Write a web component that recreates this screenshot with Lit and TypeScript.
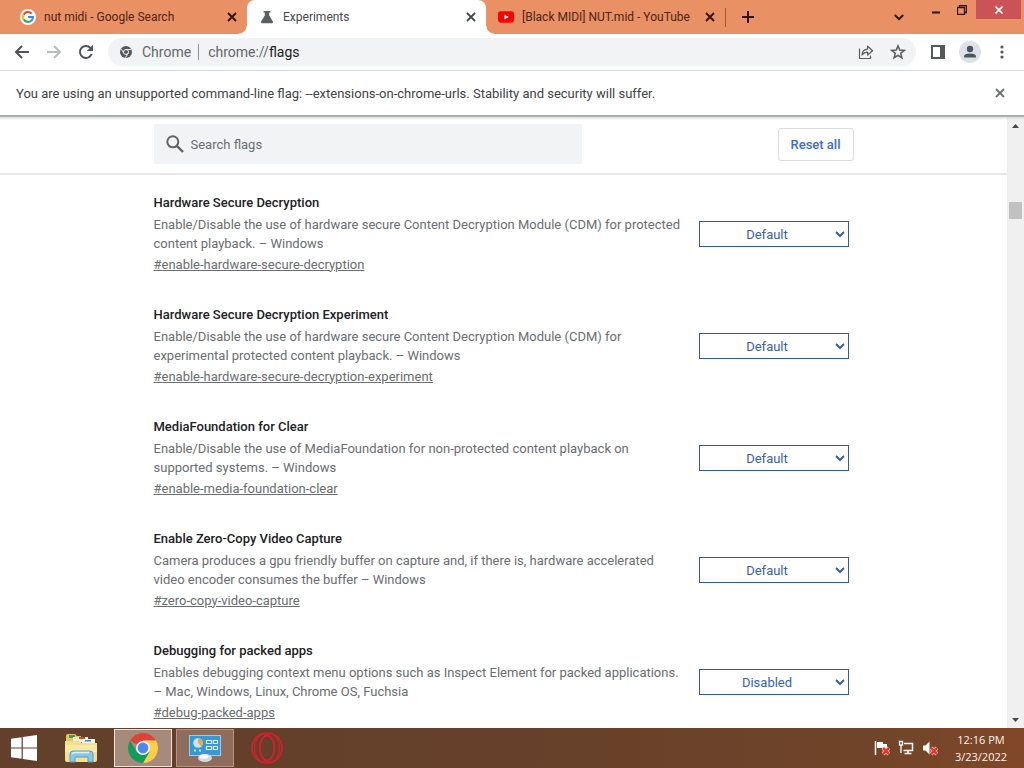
import { LitElement, html, css, svg } from "lit";
import { customElement, property } from "lit/decorators.js";

interface Flag {
  id: string;
  title: string;
  description: string;
  platforms: string;
  value: string;
}

const FLAGS: Flag[] = [
  {
    id: "enable-hardware-secure-decryption",
    title: "Hardware Secure Decryption",
    description:
      "Enable/Disable the use of hardware secure Content Decryption Module (CDM) for protected content playback.",
    platforms: "Windows",
    value: "Default",
  },
  {
    id: "enable-hardware-secure-decryption-experiment",
    title: "Hardware Secure Decryption Experiment",
    description:
      "Enable/Disable the use of hardware secure Content Decryption Module (CDM) for experimental protected content playback.",
    platforms: "Windows",
    value: "Default",
  },
  {
    id: "enable-media-foundation-clear",
    title: "MediaFoundation for Clear",
    description:
      "Enable/Disable the use of MediaFoundation for non-protected content playback on supported systems.",
    platforms: "Windows",
    value: "Default",
  },
  {
    id: "zero-copy-video-capture",
    title: "Enable Zero-Copy Video Capture",
    description:
      "Camera produces a gpu friendly buffer on capture and, if there is, hardware accelerated video encoder consumes the buffer",
    platforms: "Windows",
    value: "Default",
  },
  {
    id: "debug-packed-apps",
    title: "Debugging for packed apps",
    description:
      "Enables debugging context menu options such as Inspect Element for packed applications.",
    platforms: "Mac, Windows, Linux, Chrome OS, Fuchsia",
    value: "Disabled",
  },
];

const closeIcon = html`<svg width="10" height="10" viewBox="0 0 10 10" aria-hidden="true">
  <path d="M1 1L9 9M9 1L1 9" fill="none" stroke="currentColor" stroke-width="1.8" />
</svg>`;

const googleIcon = html`<svg width="16" height="16" viewBox="0 0 16 16" aria-hidden="true">
  <circle cx="8" cy="8" r="8" fill="#fff" />
  <g fill="none" stroke-width="2">
    <path d="M11.6 4.5A5 5 0 0 0 3.6 5.7" stroke="#ea4335" />
    <path d="M3.6 5.6A5 5 0 0 0 3.6 10.4" stroke="#fbbc05" />
    <path d="M3.6 10.3A5 5 0 0 0 11.2 11.8" stroke="#34a853" />
    <path d="M8 8H13A5 5 0 0 1 11.1 11.9" stroke="#4285f4" />
  </g>
</svg>`;

const flaskIcon = html`<svg width="14" height="14" viewBox="0 0 14 14" aria-hidden="true">
  <path d="M3.6 1H10.4V2.4H9.2V5.6L13 11.8Q13.4 13.2 12 13.2H2Q0.6 13.2 1 11.8L4.8 5.6V2.4H3.6Z" fill="#5a5d61" />
</svg>`;

const youtubeIcon = html`<svg width="17" height="12" viewBox="0 0 17 12" aria-hidden="true">
  <rect width="17" height="12" rx="3" fill="#f00" />
  <path d="M6.8 3.4L11.2 6L6.8 8.6Z" fill="#fff" />
</svg>`;

@customElement("browser-tab")
class BrowserTab extends LitElement {
  @property() label = "";
  @property({ type: Boolean, reflect: true }) active = false;

  static styles = css`
    :host {
      display: flex;
      align-items: center;
      flex: 0 1 239px;
      min-width: 0;
      height: 34px;
      padding: 0 10px 0 12px;
      box-sizing: border-box;
      color: #4d2412;
    }
    :host([active]) {
      position: relative;
      background: #fff;
      color: #45484c;
      border-radius: 8px 8px 0 0;
    }
    :host([active])::before,
    :host([active])::after {
      content: "";
      position: absolute;
      bottom: 0;
      width: 8px;
      height: 8px;
    }
    :host([active])::before {
      right: 100%;
      background: radial-gradient(circle at 0 0, transparent 7px, #fff 8px);
    }
    :host([active])::after {
      left: 100%;
      background: radial-gradient(circle at 100% 0, transparent 7px, #fff 8px);
    }
    .icon {
      display: flex;
      justify-content: center;
      width: 16px;
      margin-right: 8px;
    }
    .label {
      flex: 1;
      white-space: nowrap;
      overflow: hidden;
    }
    .close {
      display: flex;
      padding: 0;
      margin: 0;
      border: 0;
      background: none;
      color: inherit;
    }
    :host(:not([active])) .close {
      color: #2d150a;
    }
  `;

  render() {
    return html`<span class="icon"><slot></slot></span>
      <span class="label">${this.label}</span>
      <button class="close" aria-label="Close tab">${closeIcon}</button>`;
  }
}

@customElement("flag-item")
class FlagItem extends LitElement {
  @property({ attribute: false }) flag!: Flag;

  static styles = css`
    :host {
      display: flex;
      align-items: center;
      height: 112px;
      font-size: 13px;
      color: #6a6d71;
    }
    .text {
      flex: 1;
      min-width: 0;
      padding: 0 12px 2px 0;
    }
    .title {
      margin: 0 0 2px;
      font-size: 13px;
      line-height: 21px;
      font-weight: 500;
      color: #202124;
    }
    .description {
      margin: 0 0 2px;
      line-height: 19px;
    }
    .permalink {
      display: block;
      line-height: 20px;
      color: inherit;
    }
    .choice {
      width: 150px;
      height: 26px;
      margin: 0 5px 0 0;
      padding: 0 1px 0 0;
      border: 1px solid #2a6099;
      border-radius: 0;
      background: #fff;
      color: #3a62b0;
      font-family: inherit;
      font-size: 13px;
      text-align: center;
      text-align-last: center;
    }
  `;

  render() {
    const f = this.flag;
    const titleId = `${f.id}-title`;
    return html`<div class="text">
        <h3 class="title" id=${titleId}>${f.title}</h3>
        <p class="description">${`${f.description} – ${f.platforms}`}</p>
        <a class="permalink" href=${`#${f.id}`}>${`#${f.id}`}</a>
      </div>
      <select class="choice" aria-labelledby=${titleId}>
        ${["Default", "Enabled", "Disabled"].map(
          (o) => html`<option ?selected=${o === f.value}>${o}</option>`
        )}
      </select>`;
  }
}

@customElement("task-bar")
class TaskBar extends LitElement {
  static styles = css`
    :host {
      display: flex;
      align-items: center;
      flex: none;
      height: 40px;
      background: linear-gradient(90deg, #62402c, #66402a 50%, #704429 85%, #804828);
      color: #fff3e8;
    }
    .app {
      display: flex;
      align-items: center;
      justify-content: center;
      width: 58px;
      height: 38px;
      margin: 0 4px 0 0;
      padding: 0;
      border: 1px solid transparent;
      box-sizing: border-box;
      background: none;
    }
    .start {
      width: 48px;
      margin: 0;
    }
    .files {
      width: 62px;
      padding-left: 4px;
    }
    .running {
      border-color: #b9917c;
      background: #8f6c5b;
    }
    .current {
      border-color: #f3e0d6;
      background: #a68b7d;
    }
    .tray {
      display: flex;
      align-items: center;
      gap: 8px;
      margin-left: auto;
      margin-right: 16px;
    }
    .clock {
      display: flex;
      flex-direction: column;
      align-items: center;
      width: 54px;
      margin-right: 16px;
      font-family: "Open Sans", "Noto Sans", sans-serif;
      font-size: 11px;
      line-height: 17px;
      white-space: nowrap;
    }
  `;

  render() {
    const badge = svg`<path d="M9 8L15 14M15 8L9 14" stroke="#f7b0a4" stroke-width="4" /><path d="M9 8L15 14M15 8L9 14" stroke="#e0362c" stroke-width="2.4" />`;
    return html`<button class="app start" aria-label="Start">
        <svg width="26" height="26" viewBox="0 0 26 26">
          <path d="M0 3.8L10.6 2.3V12.4H0ZM11.8 2.1L26 0V12.4H11.8ZM0 13.6H10.6V23.7L0 22.2ZM11.8 13.6H26V26L11.8 23.9Z" fill="#fff" />
        </svg>
      </button>
      <button class="app files" aria-label="File Explorer">
        <svg width="34" height="32" viewBox="0 0 34 32">
          <path d="M2 4Q2 2 4 2H11L13 4H17V28H2Z" fill="#e5c469" />
          <path d="M5 3H11V6H5Z" fill="#3e9b55" />
          <path d="M9 5H24V10H9Z" fill="#f7f2dc" />
          <path d="M15 5H21V7H15Z" fill="#cc4840" />
          <path d="M18 7H31V12H18Z" fill="#f5f6f0" />
          <path d="M21 8H27V9.5H21Z" fill="#3f86c9" />
          <path d="M1 9H15L18 11H33V28Q33 30 31 30H3Q1 30 1 28Z" fill="#f5df8d" />
          <path d="M1 13H33V20H1Z" fill="#f9e9a6" />
          <path d="M6 30V22Q6 19 9 19H26Q29 19 29 22V30H24V25H11V30Z" fill="#8bc8e8" stroke="#4fa0cf" />
          <path d="M8 22Q9 20.5 11 20.5H25" stroke="#d9f2fc" stroke-width="1.5" fill="none" />
        </svg>
      </button>
      <button class="app current" aria-label="Google Chrome">
        <svg width="30" height="30" viewBox="0 0 30 30">
          <path d="M15 15L2.01 7.5A15 15 0 0 1 27.99 7.5H15Z" fill="#db4437" />
          <path d="M15 15L15 7.5H27.99A15 15 0 0 1 15 30L21.5 18.75Z" fill="#ffcd46" />
          <path d="M15 30A15 15 0 0 1 2.01 7.5L8.5 18.75L15 15L21.5 18.75Z" fill="#0f9d58" />
          <circle cx="15" cy="15" r="7" fill="#f4f4f4" />
          <circle cx="15" cy="15" r="5.4" fill="#4b87ee" />
        </svg>
      </button>
      <button class="app running" aria-label="Control Panel">
        <svg width="32" height="30" viewBox="0 0 32 30">
          <rect x="0.5" y="2.5" width="31" height="20" fill="#3798d6" stroke="#8fd0f3" />
          <circle cx="9" cy="10" r="4.8" fill="#c4e6f8" />
          <path d="M9 10V5.2A4.8 4.8 0 0 1 12.4 13.4Z" fill="#f2a93b" />
          <g fill="#3a8fc6" stroke="#d6f1ff" stroke-width="1.2">
            <path d="M17.5 7.5H22.5V10.5H17.5ZM24.5 7.5H28.5V10.5H24.5ZM17.5 13.5H22.5V16.5H17.5ZM24.5 13.5H28.5V16.5H24.5Z" />
          </g>
          <path d="M5 17.5H7M10 17.5H12" stroke="#cfe86d" stroke-width="2" />
          <ellipse cx="16" cy="25" rx="7" ry="4" fill="#d4d9dc" />
          <ellipse cx="15" cy="23.6" rx="4.4" ry="2.4" fill="#f5f7f8" />
        </svg>
      </button>
      <button class="app" aria-label="Opera">
        <svg width="34" height="34" viewBox="0 0 34 34" fill="none" stroke="#d3202f">
          <circle cx="17" cy="17" r="15" stroke-width="1.6" />
          <ellipse cx="17" cy="17" rx="7.2" ry="12.2" stroke-width="1.6" />
          <ellipse cx="14.5" cy="17" rx="10" ry="14.2" stroke-width="1.2" />
          <ellipse cx="19.5" cy="17" rx="10" ry="14.2" stroke-width="1.2" />
        </svg>
      </button>
      <div class="tray">
        <svg width="16" height="16" viewBox="0 0 16 16" fill="none" role="img" aria-label="Action Center">
          <path d="M1.5 1V15" stroke="#fff" stroke-width="1.5" />
          <path d="M3 2H9V4H13V9H8V8H3Z" fill="#fff" />
          ${badge}
        </svg>
        <svg width="16" height="16" viewBox="0 0 16 16" fill="none" stroke="#fff" role="img" aria-label="Network">
          <path d="M6 3.5H14.5V10.5H5.5M10 11V13.5M6.5 13.5H13.5" stroke-width="1.5" />
          <path d="M1.5 1.5H4.5V5H1.5ZM3 5V13" stroke-width="1.3" />
        </svg>
        <svg width="16" height="16" viewBox="0 0 16 16" fill="none" role="img" aria-label="Volume muted">
          <path d="M1 5.5H3.5L7.5 1.5V14.5L3.5 10.5H1Z" fill="#fff" />
          ${badge}
        </svg>
      </div>
      <div class="clock"><span>12:16 PM</span><span>3/23/2022</span></div>`;
  }
}

@customElement("app-root")
class AppRoot extends LitElement {
  static styles = css`
    :host {
      display: flex;
      flex-direction: column;
      height: 100vh;
      overflow: hidden;
      background: #fff;
      font-family: Roboto, "Liberation Sans", sans-serif;
      font-size: 12px;
    }
    button {
      margin: 0;
      padding: 0;
      border: 0;
      background: none;
      font-family: inherit;
      color: inherit;
    }
    svg {
      display: block;
    }
    .tabs {
      display: flex;
      flex: none;
      height: 34px;
      padding-left: 8px;
      background: #ea9065;
    }
    .new-tab {
      display: flex;
      align-items: center;
      padding-left: 16px;
      color: #2d150a;
    }
    .divider {
      align-self: center;
      width: 1px;
      height: 19px;
      background: #9b5a3b;
    }
    .window {
      display: flex;
      align-items: flex-start;
      margin-left: auto;
      color: #2d150a;
    }
    .window button {
      display: flex;
      align-items: center;
      justify-content: center;
      width: 26px;
      height: 19px;
    }
    .window .search {
      height: 34px;
      margin-right: 11px;
    }
    .window .quit {
      width: 45px;
      margin: 0 3px 0 1px;
      background: #c95356;
      color: #fff;
    }
    .toolbar {
      display: flex;
      align-items: center;
      flex: none;
      height: 37px;
      padding: 0 14px;
      box-sizing: border-box;
      border-bottom: 1px solid #d8dadc;
      color: #54575b;
    }
    .nav {
      display: flex;
      gap: 16px;
    }
    .address {
      display: flex;
      align-items: center;
      flex: 1;
      height: 28px;
      margin: 0 14px;
      padding: 0 10px 0 12px;
      border-radius: 14px;
      background: #f1f3f4;
      font-size: 14px;
      color: #64676b;
    }
    .scheme {
      padding: 0 7px 0 10px;
      margin-right: 9px;
      border-right: 1px solid #8b8e92;
      line-height: 16px;
    }
    .url {
      flex: 1;
      text-decoration: none;
      color: inherit;
    }
    .page {
      color: #202124;
    }
    .actions {
      display: flex;
      gap: 16px;
      color: #5a5d61;
    }
    .side {
      display: flex;
      align-items: center;
      gap: 13px;
    }
    .infobar {
      display: flex;
      align-items: center;
      justify-content: space-between;
      flex: none;
      height: 46px;
      padding: 0 19px 0 16px;
      box-sizing: border-box;
      border-bottom: 2px solid #acaeae;
      font-size: 13px;
      color: #3f4246;
    }
    .infobar button {
      color: #6d6f72;
    }
    .viewport {
      display: flex;
      flex: 1;
      min-height: 0;
      font-size: 13px;
    }
    .content {
      flex: 1;
      min-width: 0;
      overflow: hidden;
    }
    .head {
      height: 56px;
      border-bottom: 2px solid #e6e7e8;
      box-shadow: inset 0 3px 2px -1px #e4e5e5;
    }
    .inner {
      width: 700px;
      max-width: 100%;
      margin: 0 auto;
    }
    .head .inner {
      display: flex;
      align-items: center;
      justify-content: space-between;
      height: 54px;
    }
    .search-box {
      display: flex;
      align-items: center;
      width: 428px;
      height: 40px;
      padding-left: 12px;
      box-sizing: border-box;
      background: #f1f3f4;
      color: #5f6368;
    }
    .search-box input {
      flex: 1;
      margin: 0 0 0 7px;
      padding: 0;
      border: 0;
      outline: 0;
      background: none;
      font-family: inherit;
      font-size: 13px;
      color: #202124;
    }
    .search-box input::placeholder {
      color: #6a6d71;
    }
    .reset {
      width: 76px;
      height: 33px;
      border: 1px solid #dadce0;
      border-radius: 3px;
      font-size: 13px;
      font-weight: 500;
      color: #3670cc;
    }
    .flags {
      padding-top: 3px;
    }
    .scrollbar {
      display: flex;
      flex-direction: column;
      align-items: center;
      width: 17px;
      background: #f0f0f1;
      box-shadow: inset 0 3px 2px -1px #dcdddd;
    }
    .arrow {
      height: 17px;
      display: flex;
      align-items: center;
    }
    .track {
      flex: 1;
      padding-top: 68px;
    }
    .thumb {
      width: 13px;
      height: 17px;
      background: #c1c1c1;
    }
  `;

  render() {
    return html`<header class="tabs">
        <browser-tab label="nut midi - Google Search">${googleIcon}</browser-tab>
        <browser-tab label="Experiments" active>${flaskIcon}</browser-tab>
        <browser-tab label="[Black MIDI] NUT.mid - YouTube">${youtubeIcon}</browser-tab>
        <span class="divider"></span>
        <button class="new-tab" aria-label="New tab">
          <svg width="12" height="12" viewBox="0 0 12 12"><path d="M6 0V12M0 6H12" stroke="currentColor" stroke-width="2" /></svg>
        </button>
        <div class="window">
          <button class="search" aria-label="Search tabs">
            <svg width="10" height="7" viewBox="0 0 10 7"><path d="M0.8 1L5 5.2L9.2 1" fill="none" stroke="currentColor" stroke-width="2" /></svg>
          </button>
          <button aria-label="Minimize">
            <svg width="8" height="8" viewBox="0 0 8 8"><path d="M0 6.5H8" stroke="currentColor" stroke-width="2" /></svg>
          </button>
          <button aria-label="Restore">
            <svg width="10" height="10" viewBox="0 0 10 10"><path d="M0.5 2.5H7.5V9.5H0.5ZM2.5 2.5V0.5H9.5V7.5H7.5" fill="none" stroke="currentColor" stroke-width="1.3" /></svg>
          </button>
          <button class="quit" aria-label="Close">
            <svg width="8" height="8" viewBox="0 0 8 8"><path d="M0.5 0.5L7.5 7.5M7.5 0.5L0.5 7.5" stroke="currentColor" stroke-width="1.6" /></svg>
          </button>
        </div>
      </header>

      <nav class="toolbar">
        <div class="nav">
          <button aria-label="Back">
            <svg width="16" height="16" viewBox="0 0 16 16"><path d="M15 8H2.5M8 2L2 8L8 14" fill="none" stroke="#4f5256" stroke-width="2" /></svg>
          </button>
          <button aria-label="Forward">
            <svg width="16" height="16" viewBox="0 0 16 16"><path d="M1 8H13.5M8 2L14 8L8 14" fill="none" stroke="#b9bbbd" stroke-width="2" /></svg>
          </button>
          <button aria-label="Reload">
            <svg width="16" height="16" viewBox="0 0 16 16"><path d="M13.6 10A6 6 0 1 1 12.4 3.9" fill="none" stroke="#4f5256" stroke-width="2" /><path d="M15 0.8V7H8.8Z" fill="#4f5256" /></svg>
          </button>
        </div>
        <div class="address">
          <svg width="12" height="12" viewBox="0 0 12 12" fill="none">
            <circle cx="6" cy="6" r="6" fill="#54575b" />
            <circle cx="6" cy="6" r="2.5" stroke="#f1f3f4" />
            <path d="M6 3.5H11.5M3.8 7.2L1.2 2.9M8.2 7.2L5.4 11.9" stroke="#f1f3f4" stroke-width="0.9" />
          </svg>
          <span class="scheme">Chrome</span>
          <a class="url" href="chrome://flags">chrome://<span class="page">flags</span></a>
          <div class="actions">
            <button aria-label="Share">
              <svg width="16" height="16" viewBox="0 0 16 16" fill="none" stroke="currentColor" stroke-width="1.2"><path d="M1.5 4.5V14.5H12.5V11.5" /><path d="M4 11C4.2 7.4 6.3 5.3 9.6 5.1V2.2L14.6 6.7L9.6 11V8.1C7.2 8.1 5.5 9 4 11Z" stroke-linejoin="round" /></svg>
            </button>
            <button aria-label="Bookmark">
              <svg width="16" height="16" viewBox="0 0 16 16" fill="none" stroke="currentColor" stroke-width="1.5"><path d="M8 1.9L9.7 6.1L14.2 6.4L10.7 9.3L11.9 13.8L8 11.3L4.1 13.8L5.3 9.3L1.8 6.4L6.3 6.1Z" /></svg>
            </button>
          </div>
        </div>
        <div class="side">
          <button aria-label="Side panel">
            <svg width="16" height="16" viewBox="0 0 16 16"><path d="M2 2H14V14H2Z" fill="none" stroke="#54575b" stroke-width="2" /><path d="M10 2H14V14H10Z" fill="#54575b" /></svg>
          </button>
          <button aria-label="Profile">
            <svg width="22" height="22" viewBox="0 0 22 22"><circle cx="11" cy="11" r="11" fill="#dde2e8" /><circle cx="11" cy="8" r="3.2" fill="#4c5561" /><path d="M5 16.5V15.5Q5 12.5 11 12.5Q17 12.5 17 15.5V16.5Z" fill="#4c5561" /></svg>
          </button>
          <button aria-label="Menu">
            <svg width="16" height="16" viewBox="0 0 16 16" fill="#54575b"><circle cx="8" cy="3" r="1.6" /><circle cx="8" cy="8" r="1.6" /><circle cx="8" cy="13" r="1.6" /></svg>
          </button>
        </div>
      </nav>

      <div class="infobar">
        <span>You are using an unsupported command-line flag: --extensions-on-chrome-urls. Stability and security will suffer.</span>
        <button aria-label="Dismiss">${closeIcon}</button>
      </div>

      <div class="viewport">
        <main class="content">
          <div class="head">
            <div class="inner">
              <label class="search-box">
                <svg width="18" height="18" viewBox="0 0 18 18" fill="none" stroke="currentColor" stroke-width="2"><circle cx="6.8" cy="6.8" r="5.5" /><path d="M10.8 10.8L17 17" stroke-width="2.4" /></svg>
                <input type="text" placeholder="Search flags" aria-label="Search flags" />
              </label>
              <button class="reset">Reset all</button>
            </div>
          </div>
          <section class="inner flags">
            ${FLAGS.map((f) => html`<flag-item .flag=${f}></flag-item>`)}
          </section>
        </main>
        <div class="scrollbar">
          <div class="arrow"><svg width="7" height="4" viewBox="0 0 7 4"><path d="M3.5 0L7 4H0Z" fill="#45484a" /></svg></div>
          <div class="track"><div class="thumb"></div></div>
          <div class="arrow"><svg width="7" height="4" viewBox="0 0 7 4"><path d="M0 0H7L3.5 4Z" fill="#45484a" /></svg></div>
        </div>
      </div>

      <task-bar></task-bar>`;
  }
}
